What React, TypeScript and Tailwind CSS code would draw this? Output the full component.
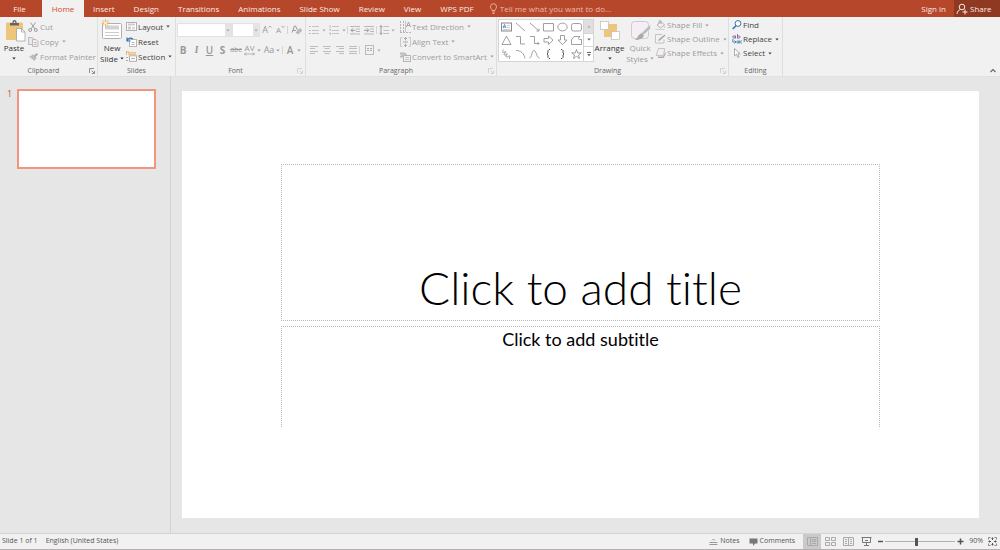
import type { ReactNode } from "react";
import clsx from "clsx";

const tabs = ["Insert", "Design", "Transitions", "Animations", "Slide Show", "Review", "View", "WPS PDF"];

type IconProps = { w?: number; h?: number; children: ReactNode; className?: string };

function Icon({ w = 10, h = 10, children, className }: IconProps) {
    return (
        <svg
            width={w}
            height={h}
            viewBox={`0 0 ${w} ${h}`}
            fill="none"
            stroke="currentColor"
            strokeWidth="1"
            className={clsx("shrink-0", className)}
            aria-hidden="true"
        >
            {children}
        </svg>
    );
}

function Caret({ className }: { className?: string }) {
    return (
        <Icon w={4} h={3} className={className}>
            <path d="M0.3 0.5h3.4L2 2.5z" fill="currentColor" stroke="none" />
        </Icon>
    );
}

function Group({
    label,
    className,
    launcher,
    children,
}: {
    label: string;
    className: string;
    launcher?: string;
    children: ReactNode;
}) {
    return (
        <section className={clsx("flex shrink-0 flex-col border-r border-[#dedede]", className)} aria-label={label}>
            <div className="flex h-[49px]">{children}</div>
            <div className="flex h-[10px] items-center">
                <span className="flex-1 text-center text-[7px] leading-[10px] text-[#666]">{label}</span>
                {launcher && (
                    <button aria-label={`${label} settings`} className={clsx("w-[10px]", launcher)}>
                        <Icon w={6} h={6} className="ml-[2px]">
                            <path d="M0.5 5V0.5H5M2.5 2.5l2.5 2.5M5.5 2.8v2.7H2.8" strokeWidth="0.8" />
                        </Icon>
                    </button>
                )}
            </div>
        </section>
    );
}

function Tool({
    icon,
    label,
    caret,
    disabled,
    short,
}: {
    icon: ReactNode;
    label: string;
    caret?: boolean;
    disabled?: boolean;
    short?: boolean;
}) {
    return (
        <button
            className={clsx(
                "flex items-center gap-px whitespace-nowrap text-[8px]",
                short ? "h-[14px]" : "h-[15px]",
                disabled ? "text-[#9c9c9c]" : "text-[#444]"
            )}
        >
            {icon}
            <span>{label}</span>
            {caret && <Caret className="ml-[2px]" />}
        </button>
    );
}

function BigTool({
    icon,
    lines,
    disabled,
    className,
}: {
    icon: ReactNode;
    lines: string[];
    disabled?: boolean;
    className: string;
}) {
    return (
        <button
            className={clsx(
                "flex flex-col items-center pt-[2px] text-[8px] leading-[11px]",
                disabled ? "text-[#9c9c9c]" : "text-[#333]",
                className
            )}
        >
            {icon}
            <span>{lines[0]}</span>
            <span className="flex h-[11px] items-center gap-[2px]">
                {lines[1]}
                <Caret />
            </span>
        </button>
    );
}

function Mini({ label, className, children }: { label: string; className: string; children: ReactNode }) {
    return (
        <button aria-label={label} className={clsx("flex h-[13px] shrink-0 items-center justify-center", className)}>
            {children}
        </button>
    );
}

function Divider() {
    return <span className="h-[8px] w-px shrink-0 bg-[#d4d4d4]" />;
}

function FontSelect({ label, className }: { label: string; className: string }) {
    return (
        <div className={clsx("relative h-[14px] border border-[#e2e2e2] bg-white", className)}>
            <select aria-label={label} className="block h-full w-full appearance-none bg-transparent text-[8px]" />
            <span className="pointer-events-none absolute inset-y-0 right-0 flex w-[6px] items-center justify-center bg-[#e4e4e4] text-[#aaa]">
                <Caret />
            </span>
        </div>
    );
}

function Clipboard() {
    return (
        <Group label="Clipboard" className="w-[98px]" launcher="text-[#777]">
            <BigTool
                className="w-[28px]"
                lines={["Paste"]}
                icon={
                    <Icon w={22} h={23} className="ml-px">
                        <rect x="2" y="3.500" width="17" height="17.500" rx="1" fill="#edc67b" stroke="none" />
                        <path d="M6 6.500V4h2.500V3a2 2 0 0 1 4 0v1H15v2.500z" fill="#666" stroke="none" />
                        <circle cx="10.500" cy="3.300" r="0.800" fill="#fff" stroke="none" />
                        <path d="M12.500 9.500h5l3.500 3.500v9h-8.500z" fill="#fff" stroke="#999" strokeWidth="0.7" />
                        <path d="M17.500 9.500v3.500H21" stroke="#999" strokeWidth="0.7" />
                    </Icon>
                }
            />
            <div className="pt-[2px]">
                <Tool
                    disabled
                    label="Cut"
                    icon={
                        <Icon w={11}>
                            <path d="M2.500 0.500l4.500 6.500M7.500 0.500L3 7" />
                            <circle cx="2.200" cy="8" r="1.500" />
                            <circle cx="7.800" cy="8" r="1.500" />
                        </Icon>
                    }
                />
                <Tool
                    disabled
                    caret
                    label="Copy"
                    icon={
                        <Icon w={11}>
                            <path d="M0.500 0.500h4l1.500 1.500v5.500h-5.500z" fill="#eee4ee" stroke="#bbb" />
                            <path d="M4.500 2.500h3.500l2 2v5H4.500z" fill="#f3eaf3" stroke="#bbb" />
                            <path d="M6 5.500h2.500M6 7.500h2.500" stroke="#c8b8c8" />
                        </Icon>
                    }
                />
                <Tool
                    disabled
                    label="Format Painter"
                    icon={
                        <Icon w={11}>
                            <path d="M6 3.500L8.500 1l1.500 1.500L7.500 5z" fill="#aaa" stroke="none" />
                            <path d="M1 4.500l3.500-1.500L8 6.500 6.500 9 1 4.500z" fill="#c1b9c1" stroke="none" />
                            <path d="M4.500 2.500L8.500 6.500" stroke="#aaa" />
                        </Icon>
                    }
                />
            </div>
        </Group>
    );
}

function Slides() {
    return (
        <Group label="Slides" className="w-[78px]">
            <BigTool
                className="w-[28px]"
                lines={["New", "Slide"]}
                icon={
                    <Icon w={22} h={23}>
                        <rect x="1.500" y="4.500" width="19" height="15" rx="1" fill="#fff" stroke="#b0b0b0" />
                        <rect x="4" y="6.500" width="14" height="4" fill="#d2d2d2" stroke="none" />
                        <path d="M4 13.500h14M4 16.500h14" stroke="#ccc" />
                        <path d="M4.500 0v8M0.500 4h8M1.500 1l6 6M7.500 1l-6 6" stroke="#e9b668" />
                        <circle cx="4.500" cy="4" r="1.500" fill="#fff3d8" stroke="none" />
                    </Icon>
                }
            />
            <div className="pt-[2px]">
                <Tool
                    caret
                    label="Layout"
                    icon={
                        <Icon w={11} className="text-[#b0b0b0]">
                            <rect x="0.500" y="0.500" width="10" height="8" fill="#fff" />
                            <path d="M2 2.500h7" stroke="#ccc" strokeWidth="2" />
                            <rect x="2" y="4.500" width="3" height="3" fill="#ccc" stroke="none" />
                            <path d="M6 5.500h3M6 7h3" stroke="#ccc" />
                        </Icon>
                    }
                />
                <Tool
                    label="Reset"
                    icon={
                        <Icon w={11} className="text-[#b5b5b5]">
                            <rect x="3.500" y="2.500" width="7" height="7" fill="#fff" />
                            <path d="M5.500 5.500h3M5.500 7.500h3" />
                            <path d="M1 0.500v3.500h3.500M1.200 3.500C2.500 0.800 5 0.500 7 2" stroke="#2f73b7" strokeWidth="1.200" />
                        </Icon>
                    }
                />
                <Tool
                    caret
                    label="Section"
                    icon={
                        <Icon w={11} h={11} className="text-[#b0b0b0]">
                            <path d="M0.500 0v4M0 1h3" stroke="#e9b668" />
                            <path d="M2.500 1.500h7v2h-7z" fill="#f7d9a2" stroke="#e9b668" strokeWidth="0.700" />
                            <rect x="3.500" y="4.800" width="7" height="5.500" fill="#fff" />
                            <path d="M0 6.500h2M0 9.500h2M5 7.500h4" />
                        </Icon>
                    }
                />
            </div>
        </Group>
    );
}

function FontGroup() {
    return (
        <Group label="Font" className="w-[130px]" launcher="text-[#ccc]">
            <div className="flex flex-1 flex-col text-[#999]">
                <div className="mt-[6px] flex h-[14px] items-center pl-px">
                    <FontSelect label="Font name" className="w-[55px]" />
                    <FontSelect label="Font size" className="w-[28px]" />
                    <Mini label="Increase font size" className="w-[14px] text-[9px]">
                        A
                        <Icon w={4} h={10}>
                            <path d="M0.500 2.500L2 1l1.500 1.500" strokeWidth="0.800" />
                        </Icon>
                    </Mini>
                    <Mini label="Decrease font size" className="w-[13px] text-[8px]">
                        A
                        <Icon w={4} h={10}>
                            <path d="M0.500 1L2 2.500 3.500 1" strokeWidth="0.800" />
                        </Icon>
                    </Mini>
                    <Divider />
                    <Mini label="Clear formatting" className="w-[17px]">
                        <Icon w={11}>
                            <path d="M1 7.500L3.500 1h1L6.500 5M2 5.500h3" />
                            <path d="M5 7.500l4-4 2 2L7 9z" fill="#bbb" stroke="#aaa" strokeWidth="0.700" />
                        </Icon>
                    </Mini>
                </div>
                <div className="mt-[6px] flex h-[14px] items-center text-[10px]">
                    <Mini label="Bold" className="w-[14px] font-bold">B</Mini>
                    <Mini label="Italic" className="w-[13px] font-serif font-bold italic">I</Mini>
                    <Mini label="Underline" className="w-[13px] font-semibold underline">U</Mini>
                    <Mini label="Shadow" className="w-[13px] font-bold">S</Mini>
                    <Mini label="Strikethrough" className="w-[14px] text-[7px] line-through">abc</Mini>
                    <Mini label="Character spacing" className="w-[19px] gap-[2px]">
                        <span className="flex flex-col items-center text-[8px] leading-[8px]">
                            AV
                            <Icon w={11} h={4}>
                                <path d="M0.500 2h10M2 0.500L0.500 2 2 3.500M9 0.500L10.500 2 9 3.500" strokeWidth="0.700" />
                            </Icon>
                        </span>
                        <Caret />
                    </Mini>
                    <Mini label="Change case" className="w-[20px] gap-[2px] text-[9px]">
                        Aa
                        <Caret />
                    </Mini>
                    <Divider />
                    <Mini label="Font colour" className="w-[22px] gap-[4px] font-semibold">
                        A
                        <Caret />
                    </Mini>
                </div>
            </div>
        </Group>
    );
}

function ListIcon({ numbered }: { numbered?: boolean }) {
    return (
        <Icon w={10}>
            <path d="M3 1.500h7M3 5.500h7M3 8.500h7" stroke="#c4c4c4" />
            {numbered ? (
                <path d="M1 0v3M0 4.500h1.500v1.500M0 8h1.500v2" strokeWidth="0.700" />
            ) : (
                <path d="M0 1.500h1.500M0 5.500h1.500M0 8.500h1.500" strokeWidth="1" />
            )}
        </Icon>
    );
}

function IndentIcon({ left }: { left?: boolean }) {
    return (
        <Icon w={10}>
            <path d="M0 1.500h10M6 4h4M6 6.500h4M0 9h10" stroke="#b8b8b8" />
            <path d={left ? "M5.500 5.300H1M3 3.300l-2 2 2 2" : "M0 5.300h4.500M2.800 3.300l2 2-2 2"} stroke="#999" />
        </Icon>
    );
}

const aligns = [
    { label: "Align left", d: "M0 1.500h8M0 3.500h5M0 6.500h8M0 8.500h5" },
    { label: "Center", d: "M0 1.500h8M1.500 3.500h5M0 6.500h8M1.500 8.500h5" },
    { label: "Align right", d: "M0 1.500h8M3 3.500h5M0 6.500h8M3 8.500h5" },
    { label: "Justify", d: "M0 1.500h8M0 3.500h8M0 6.500h8M0 8.500h8" },
];

function Paragraph() {
    return (
        <Group label="Paragraph" className="w-[191px]" launcher="text-[#ccc]">
            <div className="flex w-[94px] shrink-0 flex-col text-[#aaa]">
                <div className="mt-[6px] flex h-[14px] items-center pl-px">
                    <Mini label="Bullets" className="w-[21px] gap-[3px]">
                        <ListIcon />
                        <Caret />
                    </Mini>
                    <Mini label="Numbering" className="w-[19px] gap-[3px]">
                        <ListIcon numbered />
                        <Caret />
                    </Mini>
                    <Divider />
                    <Mini label="Decrease indent" className="w-[14px]">
                        <IndentIcon left />
                    </Mini>
                    <Mini label="Increase indent" className="w-[14px]">
                        <IndentIcon />
                    </Mini>
                    <Divider />
                    <Mini label="Line spacing" className="w-[20px] gap-[2px]">
                        <Icon w={10}>
                            <path d="M4.500 1.500H10M4.500 5.500H10M4.500 8.500H10" stroke="#c0c0c0" />
                            <path d="M2 0.500v9M0.500 2.200L2 0.700l1.500 1.500M0.500 7.800L2 9.300l1.500-1.500" stroke="#999" />
                        </Icon>
                        <Caret />
                    </Mini>
                </div>
                <div className="mt-[6px] flex h-[14px] items-center pl-px">
                    {aligns.map((a) => (
                        <Mini key={a.label} label={a.label} className="w-[13px]">
                            <Icon w={8}>
                                <path d={a.d} stroke="#bdbdbd" />
                            </Icon>
                        </Mini>
                    ))}
                    <Divider />
                    <Mini label="Columns" className="ml-[2px] w-[22px] gap-[3px]">
                        <Icon w={9}>
                            <rect x="0.500" y="0.500" width="8" height="9" fill="#f6eef6" stroke="#bbb" />
                            <path d="M2 3.500h2M5 3.500h2M2 5.500h2M5 5.500h2" stroke="#aaa" />
                        </Icon>
                        <Caret />
                    </Mini>
                </div>
            </div>
            <div className="pt-[2px]">
                <Tool
                    disabled
                    caret
                    label="Text Direction"
                    icon={
                        <Icon w={11} h={12}>
                            <path d="M0.500 0v11M3.500 0v11M0 11.500h11" stroke="#b5b5b5" strokeDasharray="2 1" />
                            <path d="M5.500 0v11" stroke="#c5c5c5" />
                            <path d="M6.500 6L8.500 1 10.500 6M7.200 4.500h2.600" strokeWidth="0.900" />
                        </Icon>
                    }
                />
                <Tool
                    disabled
                    caret
                    label="Align Text"
                    icon={
                        <Icon w={11}>
                            <path d="M2.500 0.500h-2v9h2M8.500 0.500h2v9h-2" stroke="#c8c8c8" />
                            <path d="M5.500 0v3.500M4 2l1.500-1.500L7 2M5.500 10V6.500M4 8l1.500 1.500L7 8M3 5h5" strokeWidth="0.800" />
                        </Icon>
                    }
                />
                <Tool
                    disabled
                    caret
                    label="Convert to SmartArt"
                    icon={
                        <Icon w={11}>
                            <path d="M0 1h5l2 2-2 2H0l1.500-2z" fill="#c8c8c8" stroke="#aaa" strokeWidth="0.700" />
                            <rect x="3.500" y="3.500" width="7" height="6" fill="#f3f3f3" stroke="#b5b5b5" />
                            <path d="M5 5.500h4M5 7.500h4" stroke="#c4c4c4" />
                        </Icon>
                    }
                />
            </div>
        </Group>
    );
}

const shapes = [
    { name: "Line", d: "M1 1l9 8" },
    { name: "Arrow", d: "M1 1l9 8M10 6.500V9H7.500" },
    { name: "Rectangle", d: "M0.500 1.500h10v7.500h-10z" },
    { name: "Ellipse", d: "M0.800 5a4.700 3.900 0 1 0 9.400 0a4.700 3.900 0 1 0-9.400 0" },
    { name: "Rounded rectangle", d: "M2.500 1.500h6a2 2 0 0 1 2 2v3.500a2 2 0 0 1-2 2h-6a2 2 0 0 1-2-2V3.500a2 2 0 0 1 2-2z" },
    { name: "Triangle", d: "M5.500 1L10 9.500H1z" },
    { name: "Elbow", d: "M1 1.500h4.500v7.500H10" },
    { name: "Elbow arrow", d: "M1 1.500h4.500v7H10M8.500 7L10 8.500 8.500 10" },
    { name: "Right arrow", d: "M1 3.500h4.500v-2.500L10 5.200 5.500 9.500V7H1z" },
    { name: "Down arrow", d: "M3.500 0.500h4v4.500H10L5.500 9.700 1 5h2.500z" },
    { name: "Freeform", d: "M3 1.500h6C7.500 2.500 7 4.500 8.500 4.500h2V9.500h-10V5z" },
    { name: "Scribble", d: "M2.500 0.500C1 3 1.500 4 3 3.500S5 1.500 4.500 3 2 6 3.500 6 6.500 3.500 6 5 4 8 5.500 8s3-1.500 3.500-1-2 3 0 2.500" },
    { name: "Arc", d: "M1 1.500c5 0 8 3 9 8" },
    { name: "Curve", d: "M0.500 9C3 9 2.500 1.500 5 1.500S7.500 9 10.500 9" },
    { name: "Left brace", d: "M7 0.500H6L5 1.500v2.500L4 5l1 1v2.500l1 1h1" },
    { name: "Right brace", d: "M4 0.500h1l1 1v2.500L7 5 6 6v2.500l-1 1H4" },
    { name: "Star", d: "M5.500 0.500l1.200 3.400h3.600L7.500 6l1 3.500-3-2.100-3 2.100 1-3.500L0.700 3.900h3.600z" },
];

function Drawing() {
    return (
        <Group label="Drawing" className="w-[232px]" launcher="text-[#ccc]">
            <div className="mt-[2px] ml-px flex h-[43px] shrink-0 border border-[#d4d4d4] bg-white text-[#888]">
                <div className="grid grid-cols-6">
                    <button aria-label="Text box" className="flex w-[14px] items-center justify-center">
                        <Icon w={11}>
                            <rect x="0.500" y="1" width="10" height="8" fill="#fff" />
                            <path d="M2 6l1.500-3.500L5 6M2.500 5h2" stroke="#2f73b7" strokeWidth="0.800" />
                            <path d="M6 3.500h3M6 5.500h3M2 7.500h7" stroke="#ccc" />
                        </Icon>
                    </button>
                    {shapes.map((s) => (
                        <button key={s.name} aria-label={s.name} className="flex w-[14px] items-center justify-center">
                            <Icon w={11}>
                                <path
                                    d={s.d}
                                    strokeWidth={s.name.includes("brace") ? 1 : 0.8}
                                    stroke={s.name.includes("brace") ? "#555" : "currentColor"}
                                />
                            </Icon>
                        </button>
                    ))}
                </div>
                <div className="grid w-[10px] grid-rows-3 divide-y divide-[#d4d4d4] border-l border-[#d4d4d4] text-[#666]">
                    <button aria-label="Previous shapes" className="flex items-center justify-center bg-[#e0e0e0] text-[#aaa]">
                        <Caret className="rotate-180" />
                    </button>
                    <button aria-label="Next shapes" className="flex items-center justify-center">
                        <Caret />
                    </button>
                    <button aria-label="All shapes" className="flex items-center justify-center">
                        <Icon w={4} h={5}>
                            <path d="M0 0.500h4" />
                            <path d="M0.300 2h3.400L2 4.500z" fill="currentColor" stroke="none" />
                        </Icon>
                    </button>
                </div>
            </div>
            <BigTool
                className="w-[31px]"
                lines={["Arrange"]}
                icon={
                    <Icon w={20} h={23}>
                        <rect x="4" y="5" width="13" height="13" fill="#efc679" stroke="none" />
                        <rect x="0.500" y="2.500" width="8" height="8" fill="#fff" stroke="#bbb" strokeWidth="0.700" />
                        <rect x="11.500" y="12.500" width="8" height="8" fill="#fff" stroke="#bbb" strokeWidth="0.700" />
                    </Icon>
                }
            />
            <BigTool
                disabled
                className="w-[30px]"
                lines={["Quick", "Styles"]}
                icon={
                    <Icon w={21} h={23}>
                        <rect x="1.500" y="2.500" width="17" height="17" rx="3" fill="#f5eef5" stroke="#d0cad0" />
                        <path d="M20.500 5v5l-7 6-2-2z" fill="#bbb" stroke="#fff" strokeWidth="0.500" />
                        <path d="M11.500 14l2.500 2.500c-1 3-4.500 4.500-9 4.500 3-2 3-5.500 6.500-7z" fill="#aaa" stroke="none" />
                    </Icon>
                }
            />
            <div className="pt-px">
                <Tool
                    disabled
                    caret
                    short
                    label="Shape Fill"
                    icon={
                        <Icon w={11}>
                            <path d="M2 5l4-3.500L9.500 5 5.500 8z" fill="#f5eef5" stroke="#b5b5b5" />
                            <path d="M4 4V1.500a1 1 0 0 1 2 0V4" strokeWidth="0.800" />
                            <path d="M9.500 5.500v2.500M0.500 9.500h9" stroke="#d0d0d0" />
                        </Icon>
                    }
                />
                <Tool
                    disabled
                    caret
                    short
                    label="Shape Outline"
                    icon={
                        <Icon w={11}>
                            <path d="M7 0.500H0.500v8.500H9V5.500" stroke="#c4c4c4" />
                            <path d="M3 7l1-2L9.500 0.500l1 1L5 6.500z" fill="#aaa" stroke="none" />
                        </Icon>
                    }
                />
                <Tool
                    disabled
                    caret
                    short
                    label="Shape Effects"
                    icon={
                        <Icon w={11}>
                            <path d="M3 8.500h5l2.500-5v3L8.500 10H3z" fill="#aaa" stroke="none" />
                            <path d="M3.500 0.500h6.200L8.500 7.500H1.200z" fill="#f5eef5" stroke="#c4c4c4" />
                        </Icon>
                    }
                />
            </div>
        </Group>
    );
}

function Editing() {
    return (
        <Group label="Editing" className="w-[54px]">
            <div className="pt-px pl-[3px]">
                <Tool
                    short
                    label="Find"
                    icon={
                        <Icon w={10} className="text-[#2f73b7]">
                            <circle cx="6" cy="3.500" r="2.900" fill="#fff" />
                            <path d="M4 5.800L0.700 9" strokeWidth="1.500" />
                        </Icon>
                    }
                />
                <Tool
                    short
                    caret
                    label="Replace"
                    icon={
                        <Icon w={10} className="text-[#2f73b7]">
                            <circle cx="2" cy="3" r="1.200" stroke="#82599b" strokeWidth="0.800" />
                            <path d="M3.500 1.500v3M5.500 0v4.500" stroke="#82599b" strokeWidth="0.800" />
                            <circle cx="6.800" cy="3" r="1.200" stroke="#82599b" strokeWidth="0.800" />
                            <path d="M0.800 5v3H4M2.500 6.500L4 8 2.500 9.500" strokeWidth="0.800" />
                            <circle cx="5.800" cy="8" r="1.100" strokeWidth="0.800" />
                            <path d="M7.200 6.500v3M9.800 7C8.500 6.300 8 7.300 8.200 8.200S9 9.500 9.800 9" strokeWidth="0.800" />
                        </Icon>
                    }
                />
                <Tool
                    short
                    caret
                    label="Select"
                    icon={
                        <Icon w={10} className="text-[#999]">
                            <path d="M2.500 0.500v7.500l2-1.800L5.800 9.500l1.300-0.600L5.800 5.800h2.400z" fill="#fff" strokeWidth="0.800" />
                        </Icon>
                    }
                />
            </div>
        </Group>
    );
}

function TitleBar() {
    return (
        <header className="flex h-[17px] shrink-0 items-stretch bg-[#b7472a] text-[8px] text-[#fbeae5]">
            <nav className="flex">
                <button className="w-[42px] pr-[3px]">File</button>
                <button className="w-[42px] bg-[#f1f1f1] text-[#d04a2a]">Home</button>
                {tabs.map((tab) => (
                    <button key={tab} className="mr-px px-[9px] whitespace-nowrap">
                        {tab}
                    </button>
                ))}
            </nav>
            <label className="ml-[5px] flex flex-1 items-center gap-[2px] text-[#eab8aa]">
                <Icon w={9} h={11}>
                    <path d="M3 7.500C2.800 6 1.500 5.500 1.500 3.700a3 3 0 0 1 6 0C7.500 5.500 6.200 6 6 7.500zM3 9h3M3.500 10.500h2" strokeWidth="0.900" />
                </Icon>
                <input
                    aria-label="Tell me what you want to do"
                    placeholder="Tell me what you want to do..."
                    className="w-[140px] bg-transparent outline-none placeholder:text-[#eab8aa]"
                />
            </label>
            <button className="px-[8px]">Sign in</button>
            <button className="flex w-[46px] items-center gap-[2px] bg-[#8f3822] pl-[2px]">
                <Icon w={12} h={12}>
                    <circle cx="6" cy="4" r="2.800" />
                    <path d="M1 11c0.300-2.500 1.500-4 3.500-4.500M9 6.500v5M6.500 9h5" />
                </Icon>
                Share
            </button>
        </header>
    );
}

function Ribbon() {
    return (
        <div className="flex shrink-0 border-b border-[#e0e0e0] bg-[#f1f1f1]">
            <Clipboard />
            <Slides />
            <FontGroup />
            <Paragraph />
            <Drawing />
            <Editing />
            <button aria-label="Collapse the ribbon" className="mr-[4px] mb-[3px] ml-auto self-end text-[#666]">
                <Icon w={6} h={5}>
                    <path d="M0.500 4L3 1.500 5.500 4" strokeWidth="1.200" />
                </Icon>
            </button>
        </div>
    );
}

const views = [
    {
        label: "Normal",
        icon: <path d="M0.500 0.500h10v8h-10zM3.500 0.500v8M5.500 2.500h3v2h-3zM5 6.500h4" />,
    },
    {
        label: "Slide sorter",
        icon: <path d="M0.500 0.500h4v3h-4zM6.500 0.500h4v3h-4zM0.500 5.500h4v3h-4zM6.500 5.500h4v3h-4z" />,
    },
    {
        label: "Reading view",
        icon: <path d="M0.500 0.500h10v8h-10zM5.500 0.500v8M2 2.500h2M2 4.500h2M2 6.500h2M7 2.500h2M7 4.500h2M7 6.500h2" />,
    },
    {
        label: "Slide show",
        icon: <path d="M0.500 0.500h10M1.500 1v4.500h8V1M5.500 5.500v3M3 8.500h5M4 3.500h3" stroke="#777" />,
    },
];

function StatusBar() {
    return (
        <footer className="flex h-[17px] shrink-0 items-center border-t border-b border-t-[#d4d4d4] border-b-[#b5b0b0] bg-[#f1f1f1] text-[7px] text-[#555]">
            <span className="pl-[2px]">Slide 1 of 1</span>
            <button className="pl-[8px]">English (United States)</button>
            <button className="ml-auto flex items-center gap-[2px]">
                <Icon w={9} h={8} className="text-[#999]">
                    <path d="M0.500 4.500h8M0.500 6.500h8M3 2.500L4.500 1 6 2.500" />
                </Icon>
                Notes
            </button>
            <button className="ml-[9px] flex items-center gap-[2px]">
                <Icon w={9} h={8}>
                    <path d="M0.500 0.500h8v5H6l-2 2.500V5.500H0.500z" fill="#777" stroke="none" />
                </Icon>
                Comments
            </button>
            <div className="ml-[8px] flex h-full">
                {views.map((v, i) => (
                    <button
                        key={v.label}
                        aria-label={v.label}
                        className={clsx("flex w-[18px] items-center justify-center text-[#aaa]", i === 0 && "bg-[#cacaca] text-[#999]")}
                    >
                        <Icon w={11} h={9}>
                            {v.icon}
                        </Icon>
                    </button>
                ))}
            </div>
            <button aria-label="Zoom out" className="ml-[3px] flex h-full w-[7px] items-center">
                <Icon w={5} h={7}>
                    <path d="M0 3.500h5" strokeWidth="1.500" />
                </Icon>
            </button>
            <input
                type="range"
                aria-label="Zoom"
                min={10}
                max={190}
                defaultValue={90}
                className="h-[9px] w-[70px] appearance-none bg-[linear-gradient(#b0b0b0,#b0b0b0)] bg-size-[100%_1px] bg-center bg-no-repeat [&::-webkit-slider-thumb]:h-[8px] [&::-webkit-slider-thumb]:w-[3px] [&::-webkit-slider-thumb]:appearance-none [&::-webkit-slider-thumb]:bg-[#555]"
            />
            <button aria-label="Zoom in" className="flex h-full w-[14px] items-center pl-[2px]">
                <Icon w={7} h={7}>
                    <path d="M0.500 3.500h6M3.500 0.500v6" strokeWidth="1.500" />
                </Icon>
            </button>
            <span>90%</span>
            <button aria-label="Fit slide to window" className="mr-[3px] ml-[5px]">
                <Icon w={9} h={9}>
                    <path d="M0.500 2.500v-2h2M6.500 0.500h2v2M8.500 6.500v2h-2M2.500 8.500h-2v-2" stroke="#888" />
                    <path d="M4.500 0.500v2.500M4.500 6v2.500M0.500 4.500H3M6 4.500h2.500M3.500 1.500h2M3.500 7.500h2M1.500 3.500v2M7.500 3.500v2" />
                </Icon>
            </button>
        </footer>
    );
}

function App() {
    return (
        <div className="flex min-h-screen flex-col bg-[#e6e6e6] font-['Open_Sans',sans-serif]">
            <TitleBar />
            <Ribbon />
            <main className="flex flex-1">
                <aside className="flex w-[171px] shrink-0 items-start border-r border-[#d2d2d2] pt-[12px]">
                    <span className="w-[17px] pl-[7px] text-[9px] leading-[10px] text-[#d35230]">1</span>
                    <button
                        aria-label="Slide 1"
                        className="h-[80px] w-[139px] border-2 border-[#f0967f] bg-white"
                    />
                </aside>
                <section className="flex flex-1 pt-[14px] pr-[21px] pb-[15px] pl-[11px]">
                    <div className="flex flex-1 flex-col items-center gap-[5px] bg-white px-[99px] pt-[73px] font-['Lato',sans-serif] text-black [font-variant-ligatures:none]">
                        <button className="flex h-[157px] w-full items-end justify-center border border-dotted border-[#b8b8b8] pb-[4px] text-[46px] leading-[56px] font-light">
                            Click to add title
                        </button>
                        <button className="flex h-[101px] w-full items-start justify-center border border-b-0 border-dotted border-[#b8b8b8] pt-px text-[18px] leading-[22px]">
                            Click to add subtitle
                        </button>
                    </div>
                </section>
            </main>
            <StatusBar />
        </div>
    );
}

export default App;
